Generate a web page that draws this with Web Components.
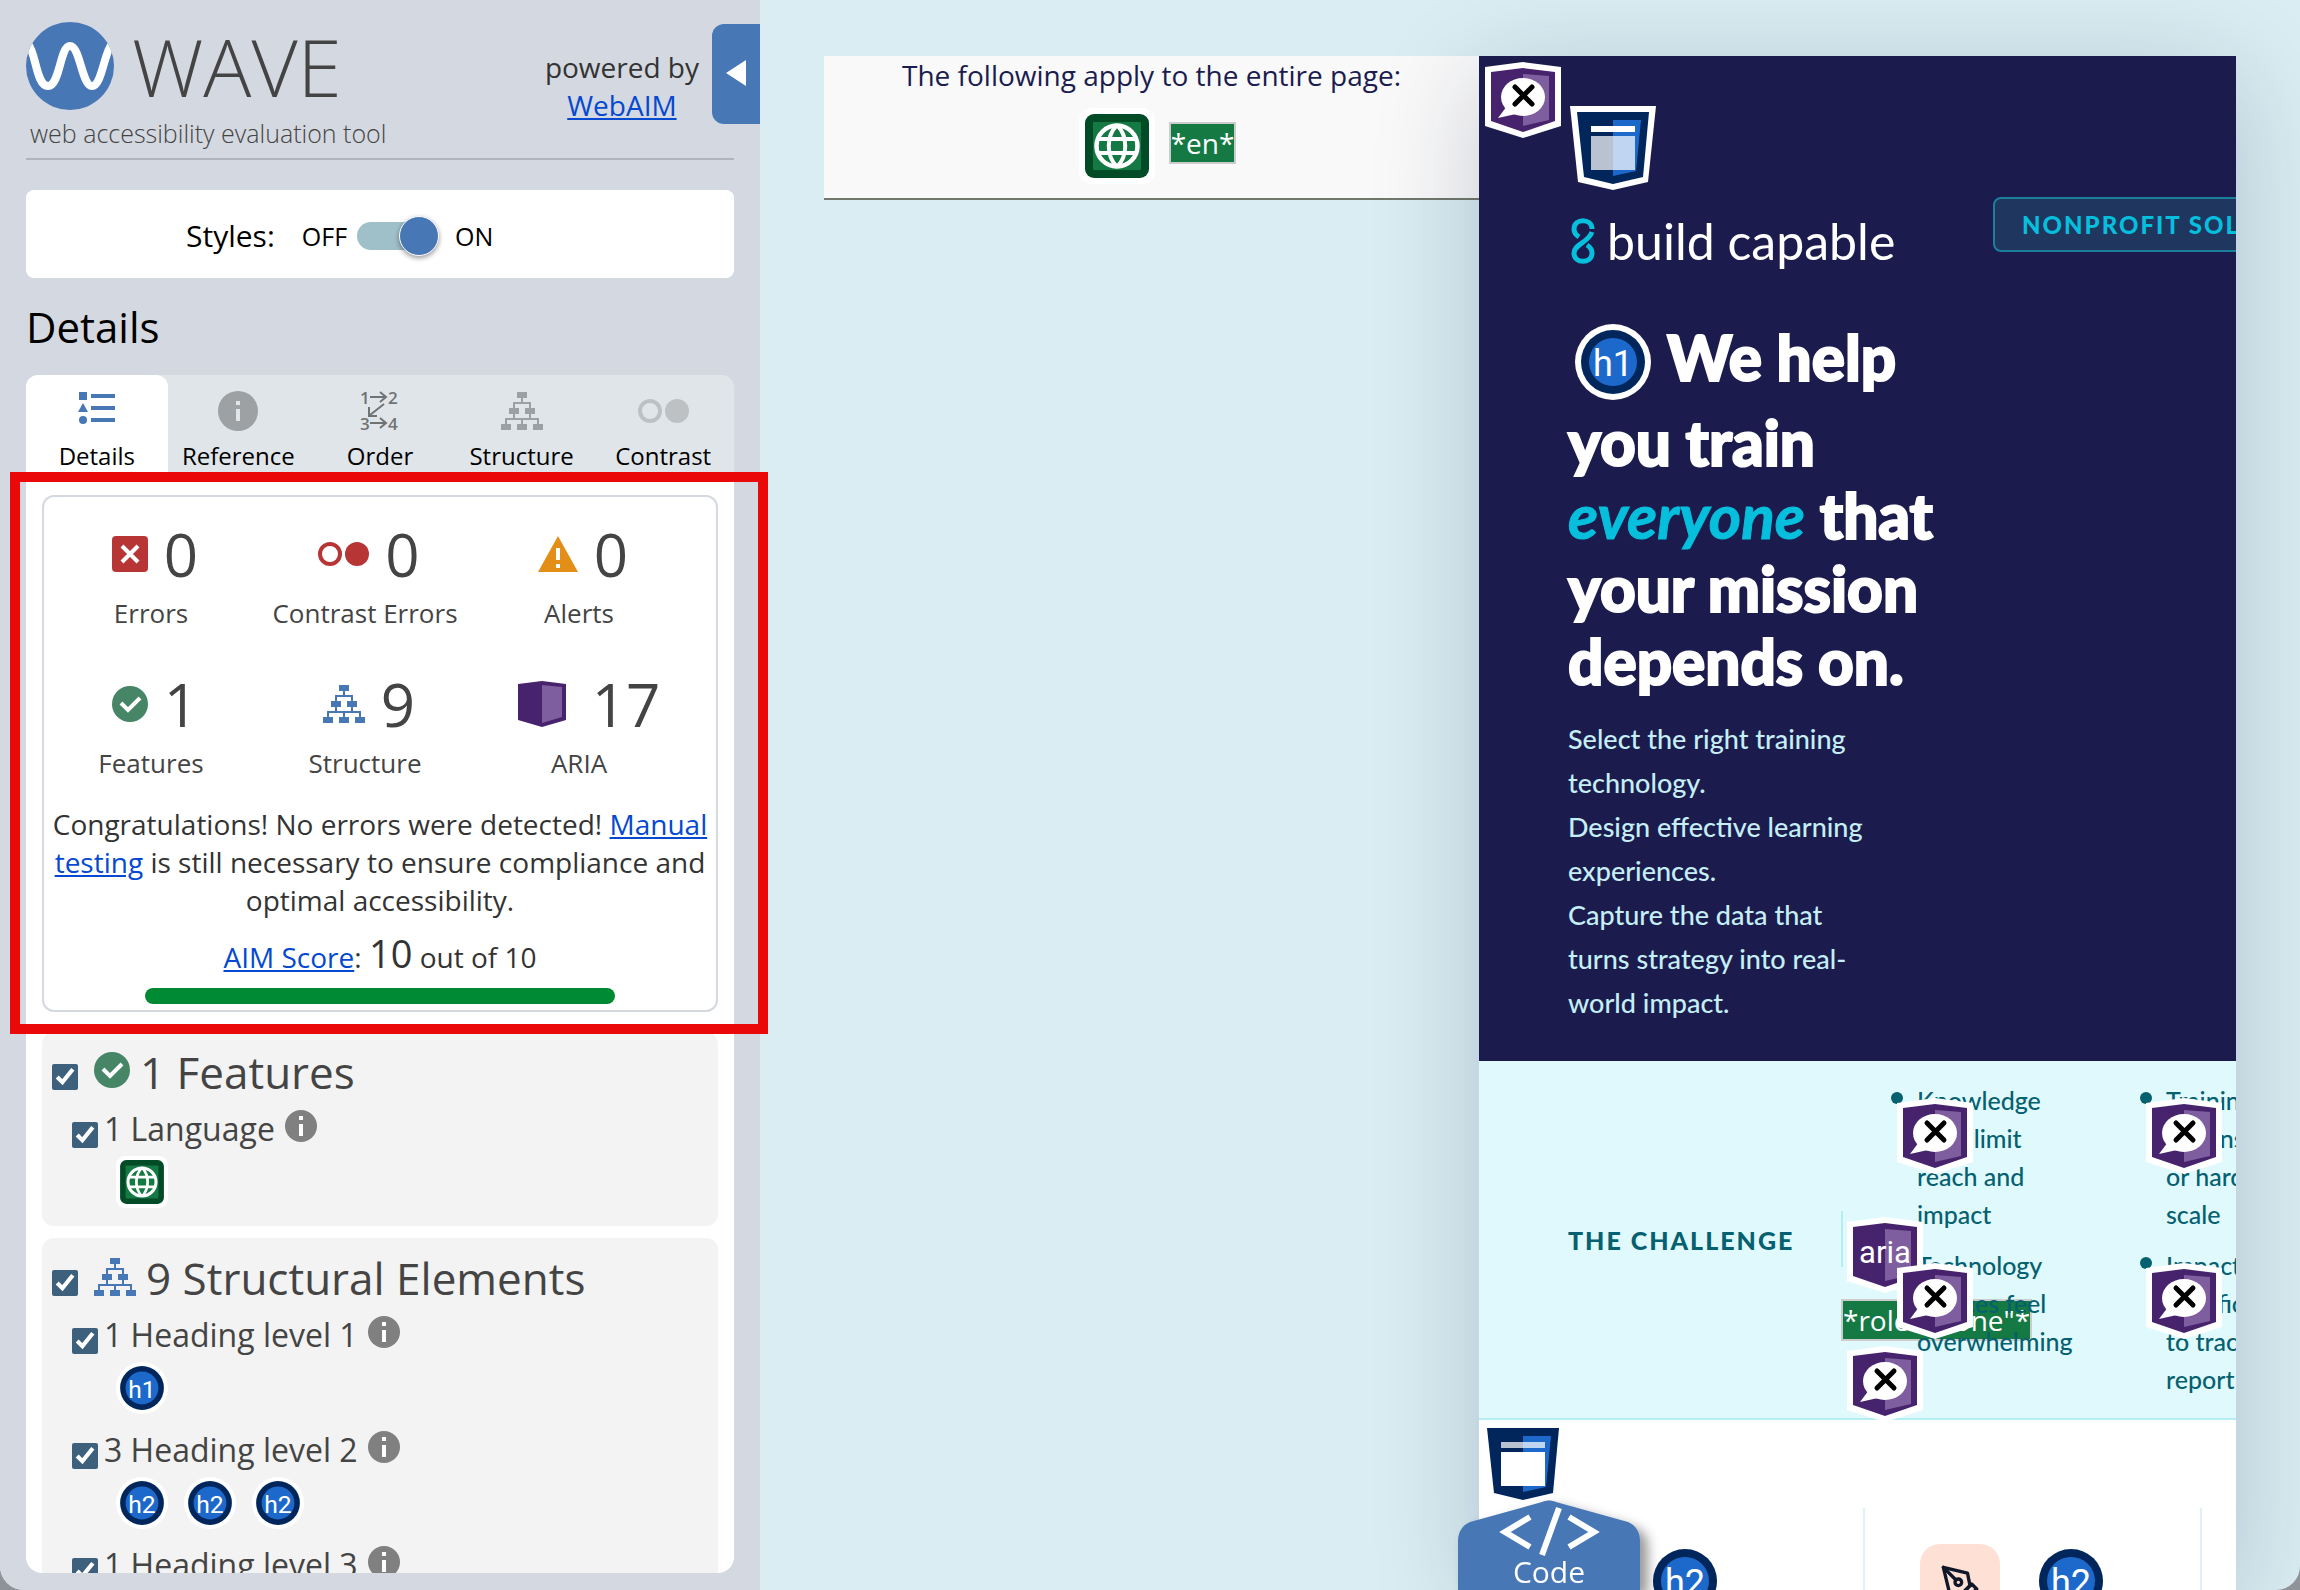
<!DOCTYPE html>
<html lang="en">
<head>
<meta charset="utf-8">
<title>WAVE Report</title>
<style>
  html { background: #8f9298; }
  body { margin: 0; font-family: "Open Sans", "Noto Sans", sans-serif; font-size: 28px; line-height: 38px; color: #444; }
</style>
</head>
<body>
<wave-app>
  <wave-sidebar slot="sidebar">
    <wave-summary slot="summary">
      <wave-stat icon="error" count="0">Errors</wave-stat>
      <wave-stat icon="contrast" count="0">Contrast Errors</wave-stat>
      <wave-stat icon="alert" count="0">Alerts</wave-stat>
      <wave-stat icon="feature" count="1">Features</wave-stat>
      <wave-stat icon="structure" count="9">Structure</wave-stat>
      <wave-stat icon="aria" count="17">ARIA</wave-stat>
    </wave-summary>
    <wave-group icon="feature" label="1 Features">
      <wave-item label="1 Language"><wave-badge type="lang" size="52"></wave-badge></wave-item>
    </wave-group>
    <wave-group icon="structure" label="9 Structural Elements">
      <wave-item label="1 Heading level 1"><wave-badge type="heading" text="h1" size="52"></wave-badge></wave-item>
      <wave-item label="3 Heading level 2">
        <wave-badge type="heading" text="h2" size="52"></wave-badge>
        <wave-badge type="heading" text="h2" size="52"></wave-badge>
        <wave-badge type="heading" text="h2" size="52"></wave-badge>
      </wave-item>
      <wave-item label="1 Heading level 3"></wave-item>
    </wave-group>
  </wave-sidebar>
  <page-banner></page-banner>
  <page-frame>
    <page-hero></page-hero>
    <page-challenge></page-challenge>
    <page-cards></page-cards>
  </page-frame>
</wave-app>

<script>
  const ICONS = {
    error: `<svg width="36" height="36" viewBox="0 0 36 36"><rect width="36" height="36" rx="4" fill="#b83535"/><path d="M10 10l16 16M26 10L10 26" stroke="#fff" stroke-width="4"/></svg>`,
    contrast: `<svg width="51" height="24" viewBox="0 0 51 24"><circle cx="12" cy="12" r="10" fill="none" stroke="currentColor" stroke-width="4"/><circle cx="39" cy="12" r="12" fill="currentColor"/></svg>`,
    alert: `<svg width="40" height="36" viewBox="0 0 40 36"><path d="M20 0L40 36H0z" fill="#e38f17"/><path d="M18 12h4v12h-4zM18 28h4v4h-4z" fill="#fff"/></svg>`,
    feature: `<svg width="36" height="36" viewBox="0 0 36 36"><circle cx="18" cy="18" r="18" fill="#468566"/><path d="M9 17l7 7 12-12" fill="none" stroke="#fff" stroke-width="4"/></svg>`,
    structure: `<svg width="42" height="38" viewBox="0 0 42 38" fill="currentColor"><path d="M16 0h10v6H16zM8 16h10v6H8zM24 16h10v6H24zM0 32h10v6H0zM16 32h10v6H16zM32 32h10v6H32z"/><path d="M21 6v5M13 16v-5h16v5M13 22v5M29 22v5M5 32v-5h32v5M21 27v5" fill="none" stroke="currentColor" stroke-width="2"/></svg>`,
    aria: `<svg width="48" height="46" viewBox="0 0 48 46"><path d="M0 3L24 0l24 3v36l-24 7-24-7z" fill="#47236d"/><path d="M24 4l20 2v30l-20 6z" fill="#7e5e9e"/></svg>`,
    info: `<svg width="32" height="32" viewBox="0 0 32 32"><circle cx="16" cy="16" r="16" fill="currentColor"/><path d="M14 6h4v4h-4zM14 14h4v12h-4z" fill="#fff"/></svg>`,
    details: `<svg width="36" height="32" viewBox="0 0 36 32" fill="currentColor"><path d="M0 0h8v8H0zM4 11l5 9H-1zM12 2h24v4H12zM12 14h24v4H12zM12 26h24v4H12z"/><circle cx="4" cy="28" r="4"/></svg>`,
    reference: `<svg width="40" height="40" viewBox="0 0 40 40"><circle cx="20" cy="20" r="20" fill="currentColor"/><path d="M18 10h4v4h-4zM18 18h4v12h-4z" fill="#e0e5e9"/></svg>`,
    order: `<svg width="40" height="40" viewBox="0 0 40 40" font-family="Open Sans, sans-serif" font-size="17" font-weight="600" fill="currentColor"><text x="0" y="13">1</text><text x="28" y="13">2</text><text x="0" y="39">3</text><text x="28" y="39">4</text><path d="M10 6h15M20 1l6 5-6 5M10 32h15M20 27l6 5-6 5M24 13L10 24M9 16v9h8" fill="none" stroke="currentColor" stroke-width="2"/></svg>`
  };

  // base class: puts the class template in an open shadow root
  class Base extends HTMLElement {
    connectedCallback() {
      if (this.shadowRoot) return;
      this.attachShadow({ mode: 'open' });
      this.shadowRoot.innerHTML = this.render();
    }
    attr(name) { return this.getAttribute(name) || ''; }
  }

  class WaveBadge extends Base {
    shape() {
      const aria = `<path d="M0 5L38 0l38 5v59L38 76 0 64z" fill="#fff"/><path d="M6 10l32-4 32 4v49L38 70 6 59z" fill="#47236d"/><path d="M38 12l26 2v44l-26 6z" fill="#7e5e9e"/>`;
      const text = this.attr('text');
      switch (this.attr('type')) {
        case 'lang':
          return `<rect width="76" height="76" rx="13" fill="#fff"/><rect x="6" y="6" width="64" height="64" rx="9" fill="#014b27"/><rect x="14" y="14" width="48" height="48" rx="1" fill="#147943"/>
            <g fill="none" stroke="#fff" stroke-width="4"><circle cx="38" cy="38" r="20.5" stroke-width="4.5"/><path d="M18 31h40M18 45h40M38 17c-11 11-11 31 0 42M38 17c11 11 11 31 0 42"/></g>`;
        case 'heading':
          return `<circle cx="38" cy="38" r="38" fill="#fff"/><circle cx="38" cy="38" r="32" fill="#01265b"/><circle cx="38" cy="38" r="24" fill="#1d69cb"/>
            <text x="38" y="52" text-anchor="middle" font-size="36" fill="#fff">${text}</text>`;
        case 'label':
          return aria + `<ellipse cx="38" cy="35" rx="22" ry="19" fill="#fff"/><path d="M22 44l-9 12 18-4z" fill="#fff"/><path d="M30 25l17 17M47 25L30 42" stroke="#000" stroke-width="5" stroke-linecap="round"/>`;
        case 'aria':
          return aria + `<text x="38" y="46" text-anchor="middle" font-size="31" fill="#fff">aria</text>`;
      }
    }
    render() {
      const size = this.attr('size') || 76;
      return `<style>:host { display: block; flex: none; } svg { display: block; font-family: Roboto, sans-serif; font-weight: 400; -webkit-text-stroke: 0; }</style>
        <svg width="${size}" height="${size}" viewBox="0 0 76 76">${this.shape()}</svg>`;
    }
  }

  // landmark badge: "header" lights up the top bar, "region" the body
  class LandmarkBadge extends Base {
    render() {
      const header = this.attr('type') === 'header';
      return `<style>:host { display: block; } svg { display: block; }</style>
        <svg width="86" height="84" viewBox="0 0 86 84">
          <path d="M0 0h86l-8 76-35 8-35-8z" fill="#fff"/><path d="M7 6h72l-6 65-30 7-29-7z" fill="#01265b"/><path d="M43 14h28l-5 51-23 5z" fill="#1d69cb"/>
          <path d="M21 20h44v6H21z" fill="#fff" opacity="${header ? 1 : 0.72}"/><path d="M21 30h44v34H21z" fill="#fff" opacity="${header ? 0.72 : 1}"/>
        </svg>`;
    }
  }

  // green *value* note that follows a badge
  class WaveNote extends Base {
    render() {
      return `<style>
        :host { display: inline-block; background: #147943; border: 2px solid #ccc; color: #fff; font: 28px/38px "Open Sans", sans-serif; white-space: nowrap; }
      </style><slot></slot>`;
    }
  }

  class WaveApp extends Base {
    render() {
      return `<style>
        :host { display: flex; height: 100vh; overflow: hidden; border-radius: 0 0 24px 24px; background: #d9edf2; }
        ::slotted(wave-sidebar) { flex: 0 0 calc(33vw + 1px); }
        main { flex: 1; min-width: 0; position: relative; display: grid; grid-template-columns: minmax(0, 655fr) minmax(0, 757fr); padding: 56px 64px 0; align-items: start; }
        .code { position: absolute; right: 660px; bottom: 0; width: 182px; height: 90px; padding: 0; border: 0; background: none; color: #fff; font: 30px/36px "Open Sans", sans-serif; filter: drop-shadow(8px 6px 6px rgba(0,0,0,.4)); }
        .code svg { position: absolute; inset: 0; }
        .code span { position: absolute; left: 0; right: 0; bottom: 0; text-align: center; }
      </style>
      <slot name="sidebar"></slot>
      <main>
        <slot></slot>
        <button class="code">
          <svg width="182" height="90" viewBox="0 0 182 90"><path d="M0 42c0-9 3-16 12-20L84 2c5-2 9-2 14 0l72 20c9 4 12 11 12 20v48H0z" fill="#4877b6"/>
          <path d="M72 17L47 32l25 15M111 17l25 15-25 15M101 8L84 55" fill="none" stroke="#fff" stroke-width="6"/></svg>
          <span>Code</span>
        </button>
      </main>`;
    }
  }

  class WaveTab extends Base {
    render() {
      return `<style>
        :host { flex: 1 1 0; min-width: 0; color: #9ea1a3; }
        :host([icon=order]) { color: #707374; }
        :host([icon=contrast]) { color: #bdc1c4; }
        :host([selected]) { color: #4877b6; }
        button { display: flex; flex-direction: column; align-items: center; gap: 9px; width: 100%; padding: 16px 0 0; border: 0; background: none; color: inherit; font: 24px/32px "Open Sans", sans-serif; border-radius: 12px 12px 0 0; }
        :host([selected]) button { background: #fff; }
        .icon { display: flex; align-items: center; height: 40px; }
        :host([selected]) .icon { height: 34px; padding-bottom: 6px; }
        .icon svg { overflow: visible; }
        .label { color: #000; }
      </style>
      <button role="tab"><span class="icon">${ICONS[this.attr('icon')]}</span><span class="label"><slot></slot></span></button>`;
    }
  }

  class WaveSidebar extends Base {
    render() {
      return `<style>
        :host { display: flex; flex-direction: column; box-sizing: border-box; height: 100vh; padding: 22px 26px 17px; background: #d4d8e0; color: #333; position: relative; }
        header { display: flex; justify-content: space-between; height: 136px; border-bottom: 2px solid #b0b4bd; }
        .brand { display: flex; gap: 18px; align-items: center; height: 88px; font-size: 80px; font-weight: 300; color: #444; }
        .tag { margin: 4px 4px 0; font-size: 25px; line-height: 38px; font-weight: 300; color: #444; }
        .by { margin: 26px 35px 0 0; text-align: center; }
        a { color: #0449d0; }
        .collapse { position: absolute; right: 0; top: 24px; width: 48px; height: 100px; padding: 0; border: 0; border-radius: 12px 0 0 12px; background: #4877b6; }
        .styles { display: flex; align-items: center; box-sizing: border-box; margin: 30px 0 0; height: 88px; padding: 4px 0 0 160px; background: #fff; border-radius: 8px; color: #000; font-size: 25px; }
        .styles b { font-size: 30px; font-weight: 400; margin-right: 27px; }
        input { appearance: none; position: relative; width: 72px; height: 28px; margin: 0 26px 0 10px; border-radius: 14px; background: #9fbfc9; }
        input::after { content: ""; position: absolute; right: -10px; top: -6px; width: 38px; height: 38px; border: 1px solid #fff; border-radius: 50%; background: #4877b6; box-shadow: 0 2px 5px rgba(0,0,0,.4); }
        h2 { margin: 20px 0 20px; font-size: 42px; line-height: 57px; font-weight: 400; color: #000; }
        .tabs { display: flex; background: #e0e5e9; border-radius: 12px 12px 0 0; }
        .panel { flex: 1; min-height: 0; padding: 0 16px; background: #fff; border-radius: 0 0 16px 16px; clip-path: inset(-100px -100px 0 -100px); }
        .scroll { display: flex; flex-direction: column; gap: 12px; height: 100%; }
      </style>
      <header>
        <div>
          <div class="brand"><svg width="88" height="88" viewBox="0 0 88 88"><defs><clipPath id="disc"><circle cx="44" cy="44" r="44"/></clipPath></defs><circle cx="44" cy="44" r="44" fill="#4877b6"/><path clip-path="url(#disc)" d="M2 22C10 30 10 64 22 64S34 24 44 24 56 64 66 64 78 30 86 22" fill="none" stroke="#fff" stroke-width="8"/></svg><span>WAVE</span></div>
          <p class="tag">web accessibility evaluation tool</p>
        </div>
        <div class="by">powered by<br><a href="#">WebAIM</a></div>
      </header>
      <button class="collapse" aria-label="Hide sidebar"><svg width="20" height="26" viewBox="0 0 20 26"><path d="M0 13L20 0v26z" fill="#fff"/></svg></button>
      <div class="styles"><b>Styles:</b><label for="styles">OFF</label><input id="styles" type="checkbox" role="switch" checked><label for="styles">ON</label></div>
      <h2>Details</h2>
      <div class="tabs" role="tablist">
        <wave-tab icon="details" selected>Details</wave-tab>
        <wave-tab icon="reference">Reference</wave-tab>
        <wave-tab icon="order">Order</wave-tab>
        <wave-tab icon="structure">Structure</wave-tab>
        <wave-tab icon="contrast">Contrast</wave-tab>
      </div>
      <div class="panel"><slot name="summary"></slot><div class="scroll"><slot></slot></div></div>`;
    }
  }

  class WaveStat extends Base {
    render() {
      return `<style>
        :host { display: block; text-align: center; font-size: 26px; line-height: 36px; color: #444; }
        .row { display: flex; align-items: center; justify-content: center; gap: 16px; height: 82px; padding-left: 8px; }
        .count { font-size: 60px; line-height: 82px; }
        svg { display: block; }
        :host([icon=contrast]) svg { color: #b83535; }
        :host([icon=structure]) svg { color: #4877b6; }
        :host([icon=aria]) .row { gap: 26px; padding-left: 20px; }
      </style>
      <div class="row">${ICONS[this.attr('icon')]}<span class="count">${this.attr('count')}</span></div><slot></slot>`;
    }
  }

  class WaveSummary extends Base {
    render() {
      return `<style>
        :host { display: block; position: relative; padding: 23px 0 20px; }
        .card { border: 2px solid #d4d8df; border-radius: 12px; padding: 16px 0 6px; text-align: center; }
        .stats { display: grid; grid-template-columns: repeat(3, 1fr); row-gap: 32px; padding-right: 30px; }
        p { margin: 24px 8px 0; }
        .score { margin: 12px 0 9px; line-height: 44px; }
        .score b { font-size: 38px; font-weight: 400; }
        a { color: #0449d0; }
        .bar { width: 70%; height: 16px; margin: 0 auto; border-radius: 8px; background: #008a33; }
        .mark { position: absolute; inset: 0 -50px -2px -32px; border: 10px solid #ea0808; pointer-events: none; }
      </style>
      <div class="card">
        <div class="stats"><slot></slot></div>
        <p>Congratulations! No errors were detected! <a href="#">Manual testing</a> is still necessary to ensure compliance and optimal accessibility.</p>
        <p class="score"><a href="#">AIM Score</a>: <b>10</b> out of 10</p>
        <div class="bar"></div>
      </div>
      <div class="mark"></div>`;
    }
  }

  class WaveGroup extends Base {
    render() {
      return `<style>
        :host { display: block; padding: 10px 10px 4px; background: #f3f3f3; border-radius: 12px; color: #444; }
        h3 { display: flex; gap: 10px; margin: 0 0 5px; font-size: 44px; line-height: 60px; font-weight: 400; }
        input { width: 26px; height: 26px; margin: 22px 6px 0 0; accent-color: #3d617c; }
        svg { margin-top: 10px; color: #4877b6; }
      </style>
      <h3><input type="checkbox" id="all" checked>${ICONS[this.attr('icon')]}<label for="all">${this.attr('label')}</label></h3>
      <slot></slot>`;
    }
  }

  class WaveItem extends Base {
    render() {
      return `<style>
        :host { display: block; margin: 0 0 14px 20px; }
        .head { display: flex; font-size: 32px; line-height: 44px; }
        input { width: 26px; height: 26px; margin: 15px 6px 0 0; accent-color: #3d617c; }
        button { margin: 3px 0 0 10px; padding: 0; border: 0; height: 32px; background: none; color: #808080; }
        svg { display: block; }
        .badges { display: flex; gap: 16px; margin: 5px 0 0 44px; }
      </style>
      <div class="head"><input type="checkbox" id="one" checked><label for="one">${this.attr('label')}</label><button aria-label="Information">${ICONS.info}</button></div>
      <div class="badges"><slot></slot></div>`;
    }
  }

  class PageBanner extends Base {
    render() {
      return `<style>
        :host { display: block; height: 142px; border-bottom: 2px solid #72786c; background: #f9f9f9; text-align: center; color: #1b1c4f; }
        .row { display: flex; justify-content: center; gap: 14px; margin-top: 14px; padding-left: 12px; }
        wave-note { align-self: flex-start; margin-top: 14px; }
      </style>
      The following apply to the entire page:
      <div class="row"><wave-badge type="lang"></wave-badge><wave-note>*en*</wave-note></div>`;
    }
  }

  class PageFrame extends Base {
    render() {
      return `<style>
        :host { display: block; height: calc(100vh - 56px); background: #fff; box-shadow: 0 20px 100px rgba(20,30,70,.2); }
        .clip { height: 100%; overflow: hidden; }
      </style><div class="clip"><slot></slot></div>`;
    }
  }

  class PageHero extends Base {
    render() {
      return `<style>
        :host { display: block; position: relative; padding: 50px 0 36px 89px; background: #1b1c4d; color: #fff; font-family: Lato, sans-serif; }
        .pin { position: absolute; left: 6px; top: 6px; }
        landmark-badge { margin-left: 2px; }
        .bar { display: flex; align-items: flex-start; gap: 95px; margin: 7px 0 44px; }
        .logo { display: flex; flex: none; align-items: center; gap: 12px; width: 330px; height: 64px; margin-top: 12px; box-sizing: border-box; padding-left: 3px; color: #fff; font-size: 50px; line-height: 64px; text-decoration: none; white-space: nowrap; }
        .nav { flex: none; border: 2px solid #1b7f9c; border-radius: 8px; padding: 0 27px; background: #1f365f; color: #06bfdd; font-size: 24px; line-height: 51px; font-weight: 900; letter-spacing: 2px; text-decoration: none; }
        h1 { max-width: 370px; margin: 0; font-size: 62px; line-height: 73px; font-weight: 900; -webkit-text-stroke: 2px; }
        h1 .first { display: flex; align-items: center; gap: 16px; padding-left: 7px; height: 80px; margin-bottom: 9px; }
        h1 wave-badge { margin-top: 10px; }
        em { color: #06bfdd; font-weight: 700; -webkit-text-stroke: 1px; }
        p { max-width: 310px; margin: 19px 0 0; font-weight: 500; font-size: 27px; line-height: 44px; color: #c5eef5; }
      </style>
      <wave-badge class="pin" type="label"></wave-badge>
      <landmark-badge type="header"></landmark-badge>
      <div class="bar">
        <a class="logo" href="#"><svg width="24" height="46" viewBox="0 0 24 46" fill="none" stroke="#06bfdd" stroke-width="5"><path d="M21 11C21 0 3 0 3 11c0 4 2 6 5 8"/><path d="M21 14C17 25 3 26 3 35c0 11 18 11 18 0 0-4-2-6-5-8"/></svg>build capable</a>
        <a class="nav" href="#">NONPROFIT SOLUTIONS</a>
      </div>
      <h1><span class="first"><wave-badge type="heading" text="h1"></wave-badge>We help</span>you train <em>everyone</em> that your mission depends on.</h1>
      <p>Select the right training technology.<br>Design effective learning experiences.<br>Capture the data that turns strategy into real-world impact.</p>`;
    }
  }

  class PageChallenge extends Base {
    render() {
      return `<style>
        :host { display: grid; grid-template-columns: 273px auto; align-items: center; box-sizing: border-box; height: 359px; padding-left: 89px; border-bottom: 2px solid #b5edf6; background: #e0f9fd; color: #05606f; font-family: Lato, sans-serif; position: relative; }
        h2 { margin: 0; font-size: 25px; line-height: 32px; font-weight: 900; letter-spacing: 2px; white-space: nowrap; }
        .body { position: relative; align-self: start; padding: 20px 0 0 76px; }
        .line { position: absolute; left: 0; top: 150px; width: 2px; height: 56px; background: #b5edf6; }
        .a { position: absolute; left: 6px; top: 156px; z-index: 1; }
        .b { position: absolute; left: 6px; top: 285px; z-index: 1; }
        wave-note { position: absolute; left: 0; top: 238px; }
        ul { position: relative; display: grid; grid-template-columns: 169px 169px; gap: 13px 80px; margin: 0; padding: 0; list-style: none; font-weight: 500; font-size: 25px; line-height: 38px; }
        li { position: relative; white-space: nowrap; }
        li::before { content: ""; position: absolute; left: -26px; top: 11px; width: 12px; height: 12px; border-radius: 50%; background: #05606f; }
        li wave-badge { position: absolute; left: -20px; top: 17px; z-index: 2; }
      </style>
      <h2>THE CHALLENGE</h2>
      <div class="body">
        <div class="line"></div>
        <wave-note>*role="none"*</wave-note>
        <wave-badge class="a" type="aria"></wave-badge>
        <wave-badge class="b" type="label"></wave-badge>
        <ul>
          <li>Knowledge<br>gaps limit<br>reach and<br>impact<wave-badge type="label"></wave-badge></li>
          <li>Training<br>is transient<br>or hard to<br>scale<wave-badge type="label"></wave-badge></li>
          <li>Technology<br>choices feel<br>overwhelming<wave-badge type="label"></wave-badge></li>
          <li>Impact<br>is difficult<br>to track and<br>report<wave-badge type="label"></wave-badge></li>
        </ul>
      </div>`;
    }
  }

  class PageCards extends Base {
    render() {
      return `<style>
        :host { display: block; background: #fff; }
        landmark-badge { padding: 2px 0 0 1px; }
        .row { display: grid; grid-template-columns: 386px 337px 1fr; margin-top: 2px; }
        .card { display: flex; align-items: flex-start; gap: 33px; height: 200px; padding-top: 35px; border-right: 2px solid #dff1f5; }
        .card:first-child { padding-left: 168px; width: 216px; }
        .card + .card { padding-left: 55px; }
        .card:last-child { border: 0; }
        .tile { flex: none; display: grid; place-items: center; width: 80px; height: 80px; margin-top: 1px; border-radius: 20px; background: #ffe0d4; }
      </style>
      <landmark-badge type="region"></landmark-badge>
      <div class="row">
        <div class="card"><wave-badge type="heading" text="h2"></wave-badge></div>
        <div class="card">
          <div class="tile"><svg width="40" height="40" viewBox="0 0 24 24" fill="none" stroke="#0f172a" stroke-width="2" stroke-linecap="round" stroke-linejoin="round"><path d="M12 19l7-7 3 3-7 7-3-3z"/><path d="M18 13l-1.500-7.500L2 2l3.500 14.500L13 18l5-5z"/><path d="M2 2l7.586 7.586"/><circle cx="11" cy="11" r="2"/></svg></div>
          <wave-badge type="heading" text="h2"></wave-badge>
        </div>
        <div class="card"></div>
      </div>`;
    }
  }

  customElements.define('wave-badge', WaveBadge);
  customElements.define('landmark-badge', LandmarkBadge);
  customElements.define('wave-note', WaveNote);
  customElements.define('wave-tab', WaveTab);
  customElements.define('wave-stat', WaveStat);
  customElements.define('wave-summary', WaveSummary);
  customElements.define('wave-item', WaveItem);
  customElements.define('wave-group', WaveGroup);
  customElements.define('wave-sidebar', WaveSidebar);
  customElements.define('page-banner', PageBanner);
  customElements.define('page-hero', PageHero);
  customElements.define('page-challenge', PageChallenge);
  customElements.define('page-cards', PageCards);
  customElements.define('page-frame', PageFrame);
  customElements.define('wave-app', WaveApp);
</script>
</body>
</html>
